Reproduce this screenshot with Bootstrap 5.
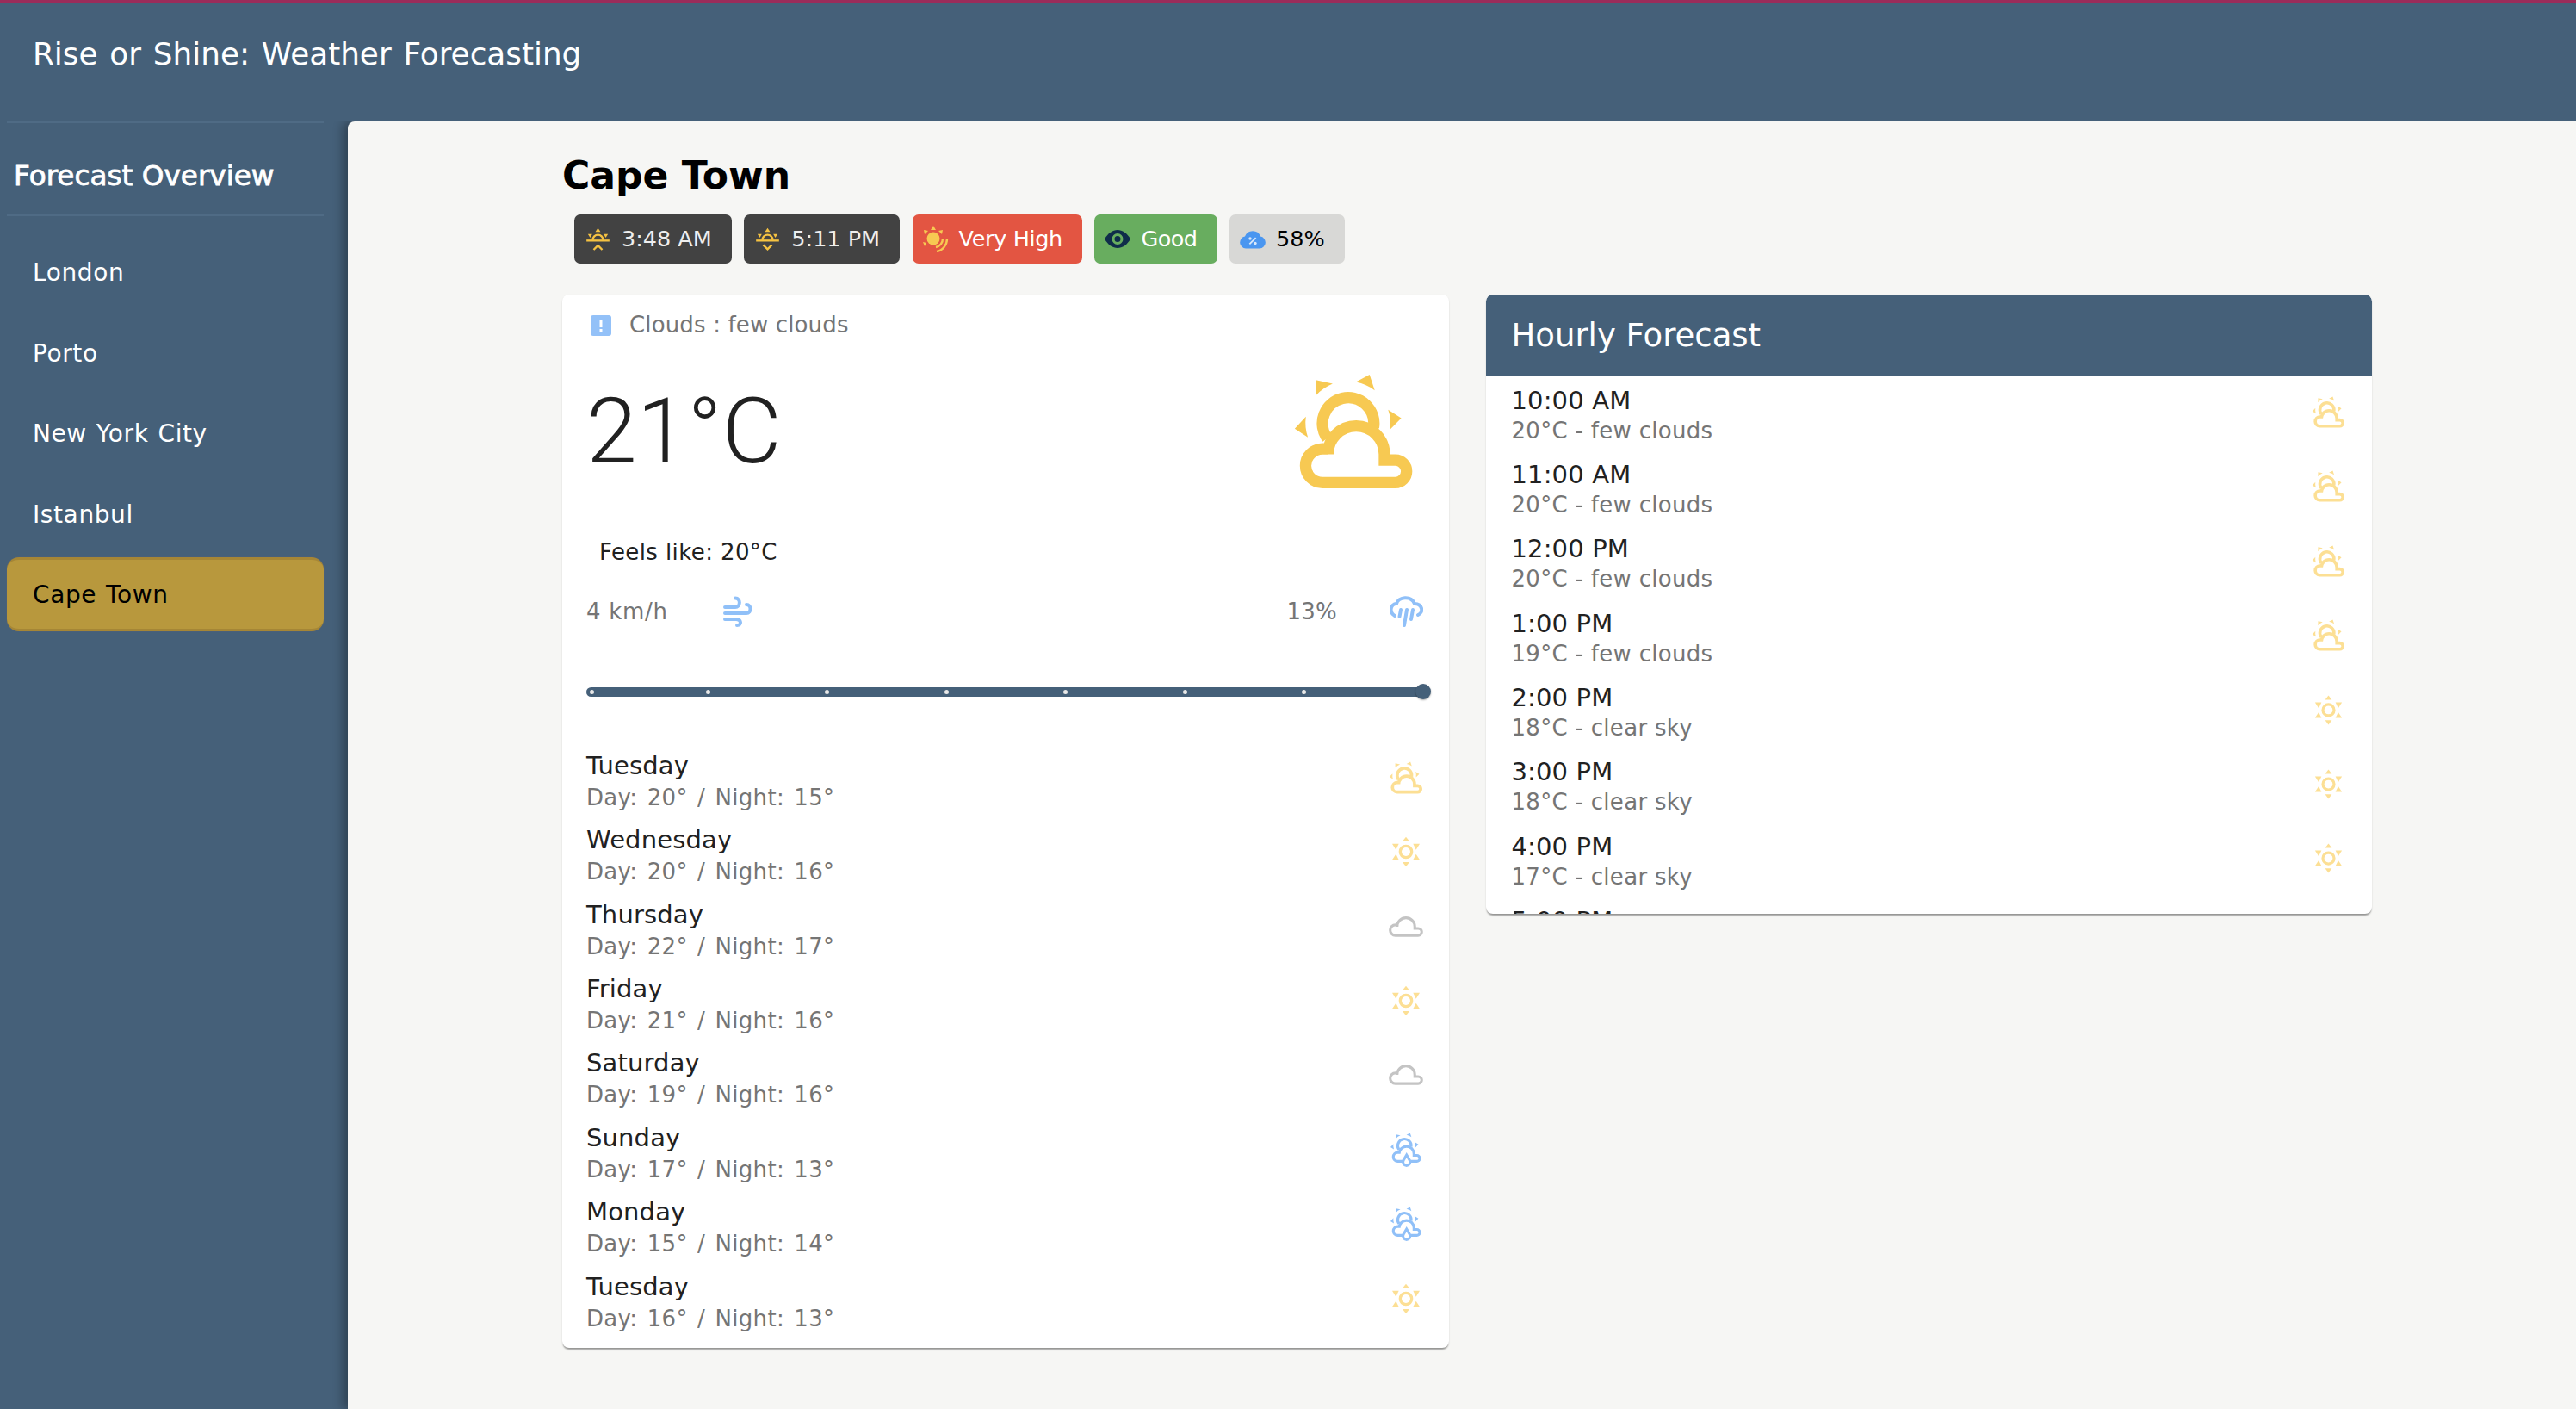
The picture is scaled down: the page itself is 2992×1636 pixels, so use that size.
<!DOCTYPE html>
<html lang="en">
<head>
<meta charset="utf-8">
<title>Rise or Shine: Weather Forecasting</title>
<link rel="stylesheet" href="https://cdn.jsdelivr.net/npm/bootstrap@5.3.0/dist/css/bootstrap.min.css">
<style>
html,body{height:100%;}
body{background:#456079;font-family:"DejaVu Sans",sans-serif;color:#212121;overflow:hidden;}
.app-top{height:141px;border-top:3px solid #9b2c5a;background:#456079;padding:0 0 18px 38px;align-items:center;}
.app-title{font-size:35.8px;word-spacing:2.5px;color:#fff;margin:0;padding:0;}
.app-body{height:1495px;}
.side{width:404px;flex:none;padding:0 28px 0 8px;}
.side-head{height:110px;border-top:2px solid #4f6b85;border-bottom:2px solid #4f6b85;color:#fff;font-size:32.7px;-webkit-text-stroke:.8px #fff;padding:18px 0 0 8px;}
.side .nav{margin-top:22px;}
.side .nav-link{height:86px;margin-bottom:7.6px;padding:2px 0 0 30px;display:flex;align-items:center;color:#fff;font-size:28px;letter-spacing:.6px;word-spacing:1.5px;}
.side .nav-link.active{background:#b8983d;color:#000;border-radius:14px;border-top:3px solid #a58636;border-bottom:3px solid #a58636;box-shadow:0 0 0 1px #4a6079;}
.stage{flex:1;background:#f6f6f4;border-top-left-radius:8px;box-shadow:-6px 0 12px rgba(0,0,0,.3);padding:0 237px 0 249px;}
.city{font-size:44px;font-weight:700;color:#000;margin:0;height:108px;padding-top:34px;line-height:58px;}
.chips{gap:14.5px;padding-left:14px;height:93px;}
.chip{height:57px;display:inline-flex;align-items:center;gap:12px;border-radius:7px;font-size:25.5px;font-weight:400;line-height:1;padding:0 23px 0 12px;}
.chip-dark{background:#424242;color:#eee;gap:13px;padding-left:13px;}
.chip-dark svg{color:#f5c242;}
.chip-red{background:#e35542;color:#fff;letter-spacing:-.35px;}
.chip-green{background:#68ad5f;color:#fff;letter-spacing:-.5px;}
.chip-grey{background:#d8d8d6;color:#000;}
.pair{gap:43px;align-items:flex-start;}
.panel{flex:none;width:1029.5px;border:0;border-radius:8px;background:#fff;box-shadow:0 1px 2px rgba(0,0,0,.1),0 3px 2px -1px rgba(0,0,0,.35);}
.panel-now{height:1223px;padding:0 30px 0 28px;}
.panel-hours{height:719px;overflow:hidden;}
.panel-head{flex:none;height:94px;background:#456079;color:#fff;font-size:37px;border:0;padding:2px 0 0 30px;display:flex;align-items:center;border-radius:8px 8px 0 0!important;}
.stat-line{font-size:26px;color:#757575;letter-spacing:.15px;}
.kmh{width:159px;letter-spacing:.7px;}
.pct{width:119px;}
.cond{height:72px;padding:0 5px;gap:21px;}
.temp-row{height:176px;align-items:center;}
.temp{font-family:Roboto,sans-serif;font-weight:300;font-size:106px;line-height:1;color:#212121;}
.feels{font-size:26px;letter-spacing:.4px;color:#212121;padding-left:15px;margin:29px 0 0;height:46px;line-height:46px;}
.metric{height:92px;}
.track{height:11px;border-radius:6px;background:#456079;margin:42px -3px 65px 0;}
.dot-mark{width:5px;height:5px;border-radius:50%;background:#e8e8e8;}
.dot-first{transform:translateX(4px);}
.thumb{width:18px;height:18px;border-radius:50%;background:#456079;box-shadow:0 1px 2px rgba(0,0,0,.35);margin:0 -6.500px;}
.rows .list-group-item{border:0;padding:0 0 16.4px;background:transparent;display:flex;align-items:center;justify-content:space-between;}
.panel-hours .rows{flex:none;padding:11.5px 32px 0 30px;border-radius:0;}
.r-top{font-size:29px;letter-spacing:.15px;line-height:35px;color:#212121;}
.panel-now .r-top{margin:-2px 0 2px;}
.r-sub{font-size:26px;letter-spacing:.3px;line-height:35px;color:#757575;}
.r-day{word-spacing:2.8px;}
.ico{display:block;flex:none;}
.big-ico{color:#f7c952;margin-right:9px;}
.tone-sun{color:#fcdf94;}
.tone-cloud{color:#c4c4c4;}
.tone-rain{color:#90c0f8;}
.day-ico{width:40px;height:40px;margin-bottom:12px;}
.hour-ico{width:39px;height:39px;margin:0 -1px 8px 0;}
</style>
</head>
<body>
<svg class="d-none" xmlns="http://www.w3.org/2000/svg">
  <symbol id="partly" viewBox="150 35 430 410">
    <g fill="currentColor"><path d="M232 60 291 73Q255 88 231 115Z"/><path d="M372 67 420 41 438 96Q410 75 372 67Z"/><path d="M485 164 531 193 490 235Q498 200 485 164Z"/><path d="M158 230 197 188Q192 225 204 260Z"/></g>
    <g fill="none" stroke="currentColor" stroke-width="40"><path d="M272 264A90 90 0 1 1 434 226"/><path d="M274 320A99 99 0 0 1 472 320V340H510A39.5 39.5 0 0 1 510 419H255A59 59 0 0 1 255 301H274Z"/></g>
  </symbol>
  <symbol id="sunny" viewBox="100 272 110 120">
    <g fill="currentColor"><path d="M155 280 167 295H143Z"/><path d="M155 384 167 368H143Z"/><path d="M180 304H203L190 325Z"/><path d="M190 340 203 360H180Z"/><path d="M130 304H107L120 325Z"/><path d="M120 340 107 360H130Z"/></g>
    <circle cx="155" cy="332" r="20" fill="none" stroke="currentColor" stroke-width="10"/>
  </symbol>
  <symbol id="cloudy" viewBox="180 128 386 386">
    <path d="M274 320A99 99 0 0 1 472 320V340H510A39.5 39.5 0 0 1 510 419H255A59 59 0 0 1 255 301H274Z" fill="none" stroke="currentColor" stroke-width="30"/>
  </symbol>
  <symbol id="showers" viewBox="140 35 450 460">
    <g fill="currentColor"><path d="M232 60 291 73Q255 88 231 115Z"/><path d="M372 67 420 41 438 96Q410 75 372 67Z"/><path d="M485 164 531 193 490 235Q498 200 485 164Z"/><path d="M158 230 197 188Q192 225 204 260Z"/></g>
    <g fill="none" stroke="currentColor" stroke-width="36"><path d="M272 264A90 90 0 1 1 434 226"/><path d="M320 419H255A59 59 0 0 1 255 301H274V320A99 99 0 0 1 472 320V340H510A39.5 39.5 0 0 1 510 419H430"/><path d="M373 335 415 405A48 48 0 1 1 331 405Z"/></g>
  </symbol>
  <symbol id="rise" viewBox="60 68 86 84">
    <g fill="currentColor"><path d="M103 70 112 84H94Z"/><path d="M68 91H83L76 104Z"/><path d="M123 91H138L130 104Z"/></g>
    <g fill="none" stroke="currentColor" stroke-width="7"><path d="M63 114H143"/><path d="M85 112A18 18 0 0 1 121 112"/><path d="M88 146 103 131 118 146"/></g>
  </symbol>
  <symbol id="set" viewBox="60 68 86 84">
    <g fill="currentColor"><path d="M103 70 112 84H94Z"/><path d="M68 91H83L76 104Z"/><path d="M123 91H138L130 104Z"/></g>
    <g fill="none" stroke="currentColor" stroke-width="7"><path d="M63 114H143"/><path d="M85 112A18 18 0 0 1 121 112"/><path d="M88 129 103 144 118 129"/></g>
  </symbol>
  <symbol id="uv" viewBox="0 0 30 31">
    <g fill="#f7c952"><circle cx="12" cy="15" r="7.5"/><path d="M12 0 15 5H9Z"/><path d="M1 5 6 6 2 10Z"/><path d="M23 5 18 6 22 10Z"/><path d="M0 19 4 20 2 24Z"/></g>
    <g fill="none" stroke="#f7c952" stroke-width="2.4"><path d="M15 25A10 10 0 0 0 23 15"/><path d="M16 30A15 15 0 0 0 28 15"/></g>
  </symbol>
  <symbol id="eye" viewBox="0 0 30 21">
    <path d="M0 10.500C8-3.500 22-3.500 30 10.500 22 24.500 8 24.500 0 10.500Z" fill="#0f2d4a"/>
    <circle cx="15" cy="10.500" r="5" fill="#0f2d4a" stroke="#68ad5f" stroke-width="3"/>
  </symbol>
  <symbol id="drop" viewBox="0 0 30 22">
    <path d="M7 21.500A7 7 0 0 1 6 7.600 9.500 9.500 0 0 1 24 7.600 7 7 0 0 1 23 21.500Z" fill="#4a96f0"/>
    <g fill="#d8e8fb"><circle cx="12" cy="10" r="1.700"/><circle cx="18" cy="15.500" r="1.700"/><path d="M18 8.500 19.300 9.700 12 17 10.700 15.800Z"/></g>
  </symbol>
  <symbol id="wind" viewBox="0 0 33 36">
    <g fill="none" stroke="currentColor" stroke-width="4" stroke-linecap="round"><path d="M2 13H14C20 13 21 2.500 14 2.500"/><path d="M2 20H27C33 20 33 10 27 10"/><path d="M2 27H15C21 27 22 34 16 34"/></g>
  </symbol>
  <symbol id="rain" viewBox="0 0 39 36">
    <g fill="none" stroke="currentColor" stroke-width="4" stroke-linecap="round"><path d="M6 23C-1 19 1 9 8 9 10 1 25-1 29 9 38 9 40 19 33 22"/><path d="M13 16 11.500 24"/><path d="M20 16 17 34"/><path d="M27 16 25 27"/></g>
  </symbol>
</svg>

<header class="navbar app-top">
  <span class="navbar-brand app-title">Rise or Shine: Weather Forecasting</span>
</header>

<div class="d-flex app-body">
  <aside class="side">
    <div class="side-head d-flex align-items-center">Forecast Overview</div>
    <nav class="nav flex-column">
      <a class="nav-link" href="#">London</a>
      <a class="nav-link" href="#">Porto</a>
      <a class="nav-link" href="#">New York City</a>
      <a class="nav-link" href="#">Istanbul</a>
      <a class="nav-link active" href="#">Cape Town</a>
    </nav>
  </aside>

  <main class="stage">
    <h1 class="city">Cape Town</h1>
    <div class="d-flex chips">
      <span class="badge chip chip-dark"><svg class="ico" width="29" height="28"><use href="#rise"/></svg>3:48 AM</span>
      <span class="badge chip chip-dark"><svg class="ico" width="29" height="28"><use href="#set"/></svg>5:11 PM</span>
      <span class="badge chip chip-red"><svg class="ico" width="30" height="31"><use href="#uv"/></svg>Very High</span>
      <span class="badge chip chip-green"><svg class="ico" width="30" height="21"><use href="#eye"/></svg>Good</span>
      <span class="badge chip chip-grey"><svg class="ico" width="30" height="22"><use href="#drop"/></svg>58%</span>
    </div>

    <div class="d-flex pair">
      <section class="card panel panel-now">
        <div class="d-flex align-items-center cond stat-line">
          <svg class="ico" width="24" height="24" viewBox="0 0 24 24"><rect width="24" height="24" rx="3" fill="#93c1f8"/><rect x="10.500" y="5" width="3" height="9" fill="#fff"/><rect x="10.500" y="16" width="3" height="3" fill="#fff"/></svg>
          <span>Clouds : few clouds</span>
        </div>
        <div class="d-flex justify-content-between temp-row">
          <div class="temp">21°C</div>
          <svg class="ico big-ico" width="143" height="136"><use href="#partly"/></svg>
        </div>
        <p class="feels">Feels like: 20°C</p>
        <div class="d-flex align-items-center justify-content-between metric stat-line">
          <div class="d-flex align-items-center"><span class="kmh">4 km/h</span><svg class="ico tone-rain" width="33" height="36"><use href="#wind"/></svg></div>
          <div class="d-flex align-items-center"><span class="pct">13%</span><svg class="ico tone-rain" width="39" height="36"><use href="#rain"/></svg></div>
        </div>
        <div class="d-flex align-items-center justify-content-between track">
          <i class="dot-mark dot-first"></i><i class="dot-mark"></i><i class="dot-mark"></i><i class="dot-mark"></i><i class="dot-mark"></i><i class="dot-mark"></i><i class="dot-mark"></i><i class="thumb"></i>
        </div>
        <ul class="list-group rows">
          <li class="list-group-item"><div><div class="r-top">Tuesday</div><div class="r-sub r-day">Day: 20° / Night: 15°</div></div><svg class="ico day-ico tone-sun"><use href="#partly"/></svg></li>
          <li class="list-group-item"><div><div class="r-top">Wednesday</div><div class="r-sub r-day">Day: 20° / Night: 16°</div></div><svg class="ico day-ico tone-sun"><use href="#sunny"/></svg></li>
          <li class="list-group-item"><div><div class="r-top">Thursday</div><div class="r-sub r-day">Day: 22° / Night: 17°</div></div><svg class="ico day-ico tone-cloud"><use href="#cloudy"/></svg></li>
          <li class="list-group-item"><div><div class="r-top">Friday</div><div class="r-sub r-day">Day: 21° / Night: 16°</div></div><svg class="ico day-ico tone-sun"><use href="#sunny"/></svg></li>
          <li class="list-group-item"><div><div class="r-top">Saturday</div><div class="r-sub r-day">Day: 19° / Night: 16°</div></div><svg class="ico day-ico tone-cloud"><use href="#cloudy"/></svg></li>
          <li class="list-group-item"><div><div class="r-top">Sunday</div><div class="r-sub r-day">Day: 17° / Night: 13°</div></div><svg class="ico day-ico tone-rain"><use href="#showers"/></svg></li>
          <li class="list-group-item"><div><div class="r-top">Monday</div><div class="r-sub r-day">Day: 15° / Night: 14°</div></div><svg class="ico day-ico tone-rain"><use href="#showers"/></svg></li>
          <li class="list-group-item"><div><div class="r-top">Tuesday</div><div class="r-sub r-day">Day: 16° / Night: 13°</div></div><svg class="ico day-ico tone-sun"><use href="#sunny"/></svg></li>
        </ul>
      </section>

      <section class="card panel panel-hours">
        <div class="card-header panel-head">Hourly Forecast</div>
        <ul class="list-group list-group-flush rows">
          <li class="list-group-item"><div><div class="r-top">10:00 AM</div><div class="r-sub">20°C - few clouds</div></div><svg class="ico hour-ico tone-sun"><use href="#partly"/></svg></li>
          <li class="list-group-item"><div><div class="r-top">11:00 AM</div><div class="r-sub">20°C - few clouds</div></div><svg class="ico hour-ico tone-sun"><use href="#partly"/></svg></li>
          <li class="list-group-item"><div><div class="r-top">12:00 PM</div><div class="r-sub">20°C - few clouds</div></div><svg class="ico hour-ico tone-sun"><use href="#partly"/></svg></li>
          <li class="list-group-item"><div><div class="r-top">1:00 PM</div><div class="r-sub">19°C - few clouds</div></div><svg class="ico hour-ico tone-sun"><use href="#partly"/></svg></li>
          <li class="list-group-item"><div><div class="r-top">2:00 PM</div><div class="r-sub">18°C - clear sky</div></div><svg class="ico hour-ico tone-sun"><use href="#sunny"/></svg></li>
          <li class="list-group-item"><div><div class="r-top">3:00 PM</div><div class="r-sub">18°C - clear sky</div></div><svg class="ico hour-ico tone-sun"><use href="#sunny"/></svg></li>
          <li class="list-group-item"><div><div class="r-top">4:00 PM</div><div class="r-sub">17°C - clear sky</div></div><svg class="ico hour-ico tone-sun"><use href="#sunny"/></svg></li>
          <li class="list-group-item"><div><div class="r-top">5:00 PM</div></div></li>
        </ul>
      </section>
    </div>
  </main>
</div>
<script src="https://cdn.jsdelivr.net/npm/bootstrap@5.3.0/dist/js/bootstrap.bundle.min.js"></script>
</body>
</html>
